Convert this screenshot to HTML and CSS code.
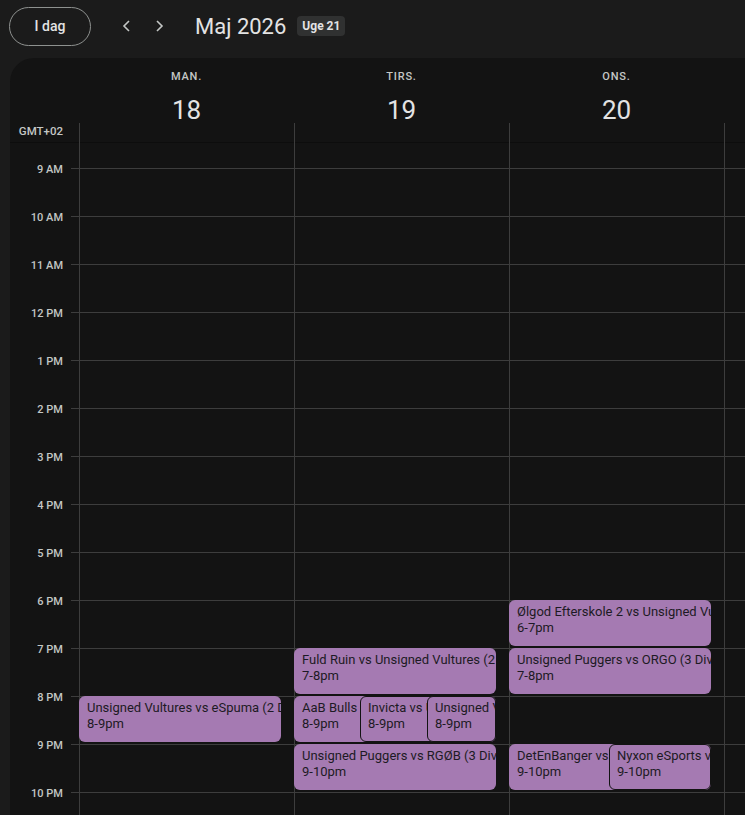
FILE: index.html
```html
<!DOCTYPE html>
<html lang="da">
<head>
    <meta charset="UTF-8">
    <meta name="viewport" content="width=device-width, initial-scale=1.0">
    <title>Kalender - Uge 21</title>
    <link rel="stylesheet" href="styles.css">
</head>
<body>
    <header class="topbar">
        <button class="today-btn">I dag</button>
        <button class="nav-btn" aria-label="Forrige uge">
            <svg width="16" height="16" viewBox="0 0 16 16"><path d="M10 3 5 8l5 5" fill="none" stroke="currentColor" stroke-width="1.6"/></svg>
        </button>
        <button class="nav-btn" aria-label="Næste uge">
            <svg width="16" height="16" viewBox="0 0 16 16"><path d="m6 3 5 5-5 5" fill="none" stroke="currentColor" stroke-width="1.6"/></svg>
        </button>
        <h1 class="month">Maj 2026</h1>
        <span class="week-badge">Uge 21</span>
    </header>

    <main class="calendar">
        <div class="cal-head">
            <div class="tz">GMT+02</div>
            <div class="day-head">
                <span class="day-name">MAN.</span>
                <span class="day-num">18</span>
                <span class="tick"></span>
            </div>
            <div class="day-head">
                <span class="day-name">TIRS.</span>
                <span class="day-num">19</span>
                <span class="tick"></span>
            </div>
            <div class="day-head">
                <span class="day-name">ONS.</span>
                <span class="day-num">20</span>
                <span class="tick"></span>
            </div>
            <div class="day-head">
                <span class="tick"></span>
            </div>
        </div>

        <div class="cal-body">
            <div class="cal-grid">
                <div class="gutter">
                    <div class="slot"></div>
                    <div class="slot"><span>9 AM</span></div>
                    <div class="slot"><span>10 AM</span></div>
                    <div class="slot"><span>11 AM</span></div>
                    <div class="slot"><span>12 PM</span></div>
                    <div class="slot"><span>1 PM</span></div>
                    <div class="slot"><span>2 PM</span></div>
                    <div class="slot"><span>3 PM</span></div>
                    <div class="slot"><span>4 PM</span></div>
                    <div class="slot"><span>5 PM</span></div>
                    <div class="slot"><span>6 PM</span></div>
                    <div class="slot"><span>7 PM</span></div>
                    <div class="slot"><span>8 PM</span></div>
                    <div class="slot"><span>9 PM</span></div>
                    <div class="slot"><span>10 PM</span></div>
                </div>

                <!-- mandag -->
                <div class="day-col">
                    <div class="event" style="top: 576px;">
                        <div class="ev-title">Unsigned Vultures vs eSpuma (2 Div)</div>
                        <div class="ev-time">8-9pm</div>
                    </div>
                </div>

                <!-- tirsdag -->
                <div class="day-col">
                    <div class="event" style="top: 528px;">
                        <div class="ev-title">Fuld Ruin vs Unsigned Vultures (2 Div)</div>
                        <div class="ev-time">7-8pm</div>
                    </div>
                    <div class="event" style="top: 576px;">
                        <div class="ev-title">AaB Bulls vs Unsigned</div>
                        <div class="ev-time">8-9pm</div>
                    </div>
                    <div class="event overlap" style="top: 576px; left: 66px; width: 136px;">
                        <div class="ev-title">Invicta vs Unsigned</div>
                        <div class="ev-time">8-9pm</div>
                    </div>
                    <div class="event overlap" style="top: 576px; left: 133px; width: 69px;">
                        <div class="ev-title">Unsigned Vultures</div>
                        <div class="ev-time">8-9pm</div>
                    </div>
                    <div class="event" style="top: 624px;">
                        <div class="ev-title">Unsigned Puggers vs RGØB (3 Div)</div>
                        <div class="ev-time">9-10pm</div>
                    </div>
                </div>

                <!-- onsdag -->
                <div class="day-col">
                    <div class="event" style="top: 480px;">
                        <div class="ev-title">Ølgod Efterskole 2 vs Unsigned Vultures</div>
                        <div class="ev-time">6-7pm</div>
                    </div>
                    <div class="event" style="top: 528px;">
                        <div class="ev-title">Unsigned Puggers vs ORGO (3 Div)</div>
                        <div class="ev-time">7-8pm</div>
                    </div>
                    <div class="event" style="top: 624px;">
                        <div class="ev-title">DetEnBanger vs Unsigned</div>
                        <div class="ev-time">9-10pm</div>
                    </div>
                    <div class="event overlap" style="top: 624px; left: 100px; width: 102px;">
                        <div class="ev-title">Nyxon eSports vs Unsigned</div>
                        <div class="ev-time">9-10pm</div>
                    </div>
                </div>

                <!-- torsdag -->
                <div class="day-col"></div>
            </div>
        </div>
    </main>
</body>
</html>
```

FILE: styles.css
```css
body {
    margin: 0;
    background-color: #1b1b1b;
    color: #e3e3e3;
    font-family: Roboto, "Liberation Sans", sans-serif;
    height: 815px;
    overflow: hidden;
}

/* top bar */
.topbar {
    display: flex;
    align-items: center;
    height: 52px;
    padding: 0 0 6px 9px;
}
.today-btn {
    width: 82px;
    height: 39px;
    border: 1px solid #8e918f;
    border-radius: 20px;
    background: transparent;
    color: #e3e3e3;
    font-family: inherit;
    font-size: 14px;
    font-weight: 500;
    cursor: pointer;
}
.nav-btn {
    width: 32px;
    height: 32px;
    padding: 0;
    border: none;
    background: transparent;
    color: #c4c7c5;
    display: flex;
    align-items: center;
    justify-content: center;
    cursor: pointer;
}
.today-btn + .nav-btn {
    margin-left: 20px;
}
.month {
    margin: 0 0 0 20px;
    font-size: 22px;
    font-weight: 400;
    color: #e3e3e3;
}
.week-badge {
    margin-left: 11px;
    padding: 2px 5px;
    border-radius: 4px;
    background-color: #303131;
    font-size: 12px;
    font-weight: 700;
    line-height: 16px;
    color: #e3e3e3;
}

/* calendar card */
.calendar {
    margin-left: 10px;
    background-color: #131313;
    border-top-left-radius: 24px;
    height: 757px;
    overflow: hidden;
}
.cal-head {
    display: grid;
    grid-template-columns: 69px repeat(4, 215px);
    height: 84px;
    box-shadow: 0 1px 0 #0d0d0d;
    position: relative;
    z-index: 1;
}
.tz {
    align-self: end;
    text-align: right;
    padding: 0 16px 5px 0;
    font-size: 11.5px;
    font-weight: 500;
    color: #c4c7c5;
}
.day-head {
    display: flex;
    flex-direction: column;
    align-items: center;
    padding-top: 11px;
}
.day-name {
    font-size: 11px;
    font-weight: 500;
    letter-spacing: 0.8px;
    line-height: 16px;
    color: #c4c7c5;
}
.day-num {
    margin-top: 12px;
    font-size: 26px;
    line-height: 26px;
    color: #e3e3e3;
}
.tick {
    margin-top: auto;
    align-self: stretch;
    height: 20px;
    border-left: 1px solid #3d3d3d;
}

/* hour grid */
.cal-body {
    height: 673px;
    overflow: hidden;
}
.cal-grid {
    display: grid;
    grid-template-columns: 69px repeat(4, 215px);
    margin-top: -22px;
}
.slot {
    display: flow-root;
    height: 48px;
    text-align: right;
    padding-right: 16px;
    font-size: 11px;
    font-weight: 500;
    color: #c4c7c5;
    background: linear-gradient(#3d3d3d, #3d3d3d) no-repeat right top / 8px 1px;
}
.slot span {
    display: block;
    margin-top: -5px;
    line-height: 14px;
}
.day-col {
    position: relative;
    height: 720px;
    background-image:
        linear-gradient(to right, #3d3d3d 1px, transparent 1px),
        linear-gradient(#3d3d3d 1px, transparent 1px);
    background-size: 100% 100%, 100% 48px;
}

/* events */
.event {
    position: absolute;
    left: 0;
    width: 202px;
    height: 46px;
    box-sizing: border-box;
    padding: 4px 8px 0;
    border-radius: 6px;
    background-color: #a57ab2;
    color: #1d1a24;
    font-size: 13px;
    line-height: 16px;
    overflow: hidden;
    white-space: nowrap;
}
.event.overlap {
    border: 1px solid #131313;
    padding: 3px 7px 0;
}
```
